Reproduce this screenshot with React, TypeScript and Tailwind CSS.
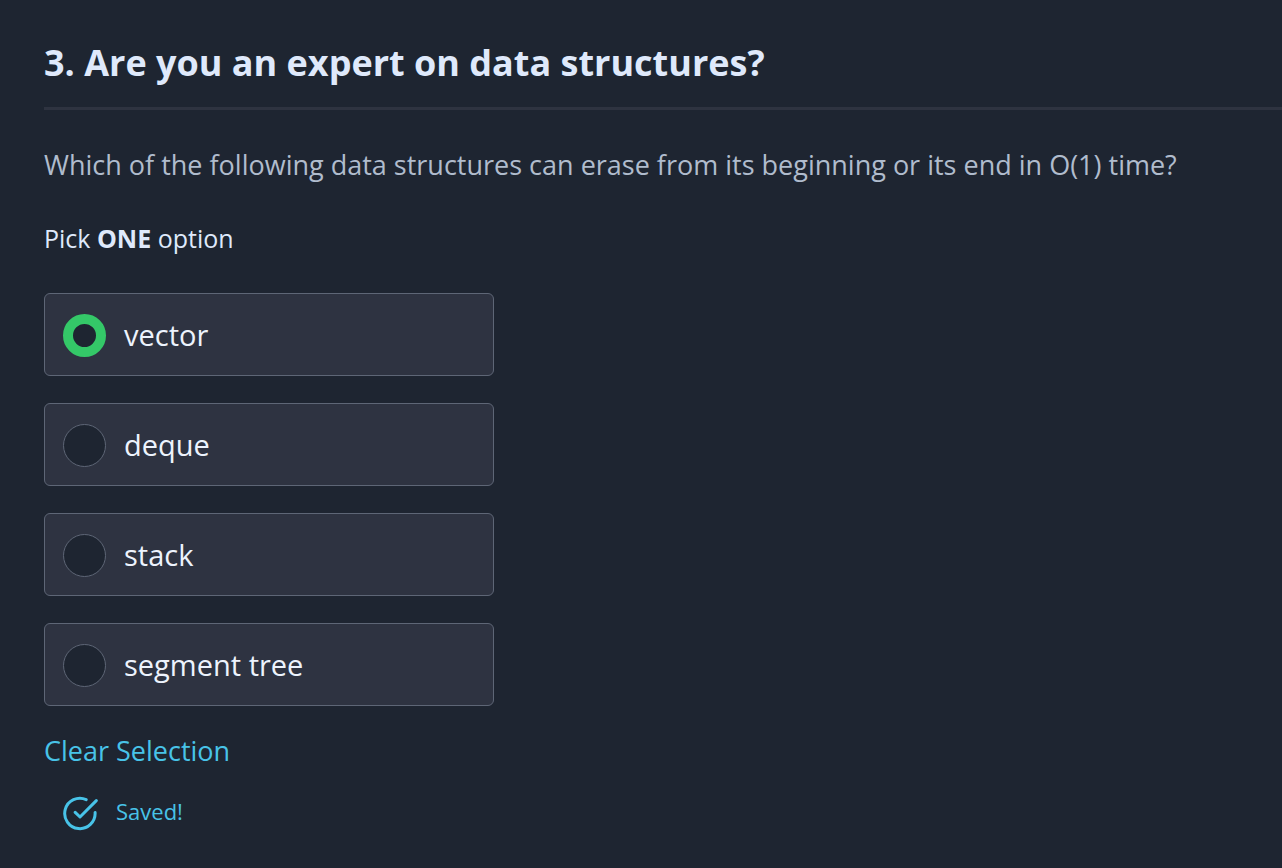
import { useState } from "react";

const options = ["vector", "deque", "stack", "segment tree"];

export default function App() {
  const [selected, setSelected] = useState<string | null>("vector");

  return (
    <main className="min-h-screen bg-[#1e2531] pt-9 pl-11 font-['Open_Sans',sans-serif] text-[#dfe9fb]">
      <h1 className="border-b-3 border-[#2e3340] pb-[18px] text-[36px] leading-[53px] font-bold">
        3. Are you an expert on data structures?
      </h1>
      <p className="mt-[35px] text-[27px] leading-10 text-[#b0bccd]">
        Which of the following data structures can erase from its beginning or its end in O(1) time?
      </p>
      <fieldset className="mt-[35px]">
        <legend className="text-[25px] leading-9">
          Pick <strong className="font-bold">ONE</strong> option
        </legend>
        <div className="mt-[37px] flex max-w-[450px] flex-col gap-[27px]">
          {options.map((option) => (
            <label
              key={option}
              className="flex cursor-pointer items-start gap-[18px] rounded-md border border-[#5e6676] bg-[#2e3341] px-[18px] pt-5 pb-[18px] text-[29px] leading-[42px] text-[#edf3fd]"
            >
              <input
                type="radio"
                name="structure"
                value={option}
                checked={selected === option}
                onChange={() => setSelected(option)}
                className="size-[43px] shrink-0 appearance-none rounded-full border border-[#5e6676] bg-[#1e2531] checked:border-10 checked:border-[#34c868]"
              />
              {option}
            </label>
          ))}
        </div>
      </fieldset>
      <button
        type="button"
        onClick={() => setSelected(null)}
        className="mt-[25px] block cursor-pointer text-[27px] leading-10 text-[#48c3e8]"
      >
        Clear Selection
      </button>
      <p className="mt-5 flex items-center gap-[18px] pl-[18px] text-[22px] leading-10 text-[#48c3e8]" role="status">
        <svg
          viewBox="0 0 36 40"
          className="h-10 w-9"
          fill="none"
          stroke="currentColor"
          strokeWidth="3"
          strokeLinecap="round"
          strokeLinejoin="round"
          aria-hidden="true"
        >
          <path d="M24.2 8.6A15.2 15.2 0 1 0 33.1 21.6" />
          <path d="M13.2 21.4L18 26L34.3 9.6" />
        </svg>
        Saved!
      </p>
    </main>
  );
}
